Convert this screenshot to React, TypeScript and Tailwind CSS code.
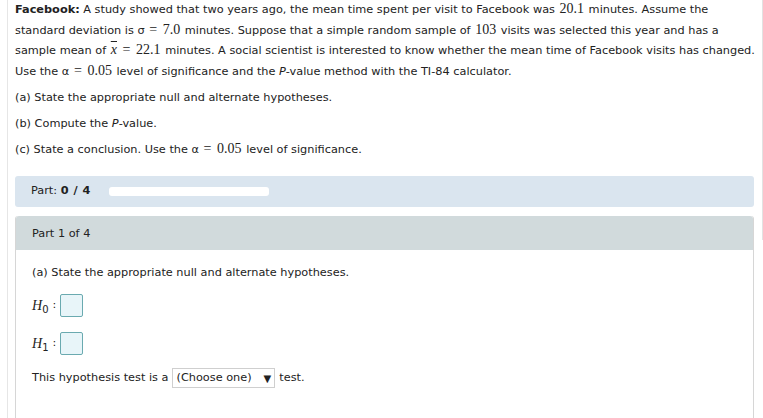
import { ReactNode } from 'react';

const font = { fontFamily: '"DejaVu Sans", Verdana, sans-serif' };

function M({ children }: { children: ReactNode }) {
    return <span className="mx-[1px] font-['Liberation_Serif',serif] text-[14px] leading-none">{children}</span>;
}

function AnswerBox() {
    return <span className="inline-block h-[23px] w-[23px] rounded-[2px] border border-[#6aaab0] bg-[#e8f5f9] align-middle" />;
}

export default function App() {
    return (
        <div className="h-[418px] w-[763px] overflow-hidden bg-white text-[11.3px] text-[#222]" style={font}>
            <div className="relative ml-[7px] border-l border-[#e6e6e6] pl-[7px] pr-[8px]">
                <span className="absolute right-0 top-0 h-[240px] w-px bg-[#e2e2e2]" />

                {/* Question text */}
                <div className="leading-[20.5px]">
                    <div>
                        <b>Facebook:</b> A study showed that two years ago, the mean time spent per visit to Facebook was <M>20.1</M> minutes. Assume the
                    </div>
                    <div>
                        standard deviation is σ <M>=</M> <M>7.0</M> minutes. Suppose that a simple random sample of <M>103</M> visits was selected this year and has a
                    </div>
                    <div>
                        sample mean of <M><i className="overline">x</i></M> <M>=</M> <M>22.1</M> minutes. A social scientist is interested to know whether the mean time of Facebook visits has changed.
                    </div>
                    <div>
                        Use the α <M>=</M> <M>0.05</M> level of significance and the <i>P</i>-value method with the TI-84 calculator.
                    </div>
                </div>

                <div className="mt-[6px] flex flex-col gap-[6px] leading-[20px]">
                    <div>(a) State the appropriate null and alternate hypotheses.</div>
                    <div>(b) Compute the <i>P</i>-value.</div>
                    <div>(c) State a conclusion. Use the α <M>=</M> <M>0.05</M> level of significance.</div>
                </div>

                {/* Progress bar */}
                <div className="mt-[16px] flex h-[31px] w-[739px] items-center rounded-[3px] bg-[#dae5ef] pl-[16px]">
                    <span>
                        Part: <b className="tracking-[0.5px]">0 / 4</b>
                    </span>
                    <span className="ml-[18px] h-[9px] w-[160px] rounded-[3px] bg-white" />
                </div>

                {/* Part panel */}
                <div className="mt-[9px] w-[739px] rounded-t-[3px] border-r border-l border-[#d6d6d6]">
                    <div className="flex h-[34px] items-center rounded-t-[3px] bg-[#d1dadc] pl-[16px] pt-[2px]">Part 1 of 4</div>
                    <div className="pl-[16px] pt-[14px] pb-[40px]">
                        <div className="leading-[18px]">(a) State the appropriate null and alternate hypotheses.</div>
                        <div className="mt-[12px] flex items-center gap-[4px]">
                            <span className="font-['Liberation_Serif',serif] text-[14px] italic">
                                H<sub className="font-['DejaVu_Sans',sans-serif] text-[10px] not-italic">0</sub>
                            </span>
                            <span>:</span>
                            <AnswerBox />
                        </div>
                        <div className="mt-[15px] flex items-center gap-[4px]">
                            <span className="font-['Liberation_Serif',serif] text-[14px] italic">
                                H<sub className="font-['DejaVu_Sans',sans-serif] text-[10px] not-italic">1</sub>
                            </span>
                            <span>:</span>
                            <AnswerBox />
                        </div>
                        <div className="mt-[13px] flex items-center">
                            <span>This hypothesis test is a</span>
                            <span className="ml-[4px] flex h-[20px] items-center gap-[12px] border border-[#cfcfcf] bg-white px-[3px]">
                                (Choose one) <span className="text-[10px]">▼</span>
                            </span>
                            <span className="ml-[4px]">test.</span>
                        </div>
                    </div>
                </div>
            </div>
        </div>
    );
}
